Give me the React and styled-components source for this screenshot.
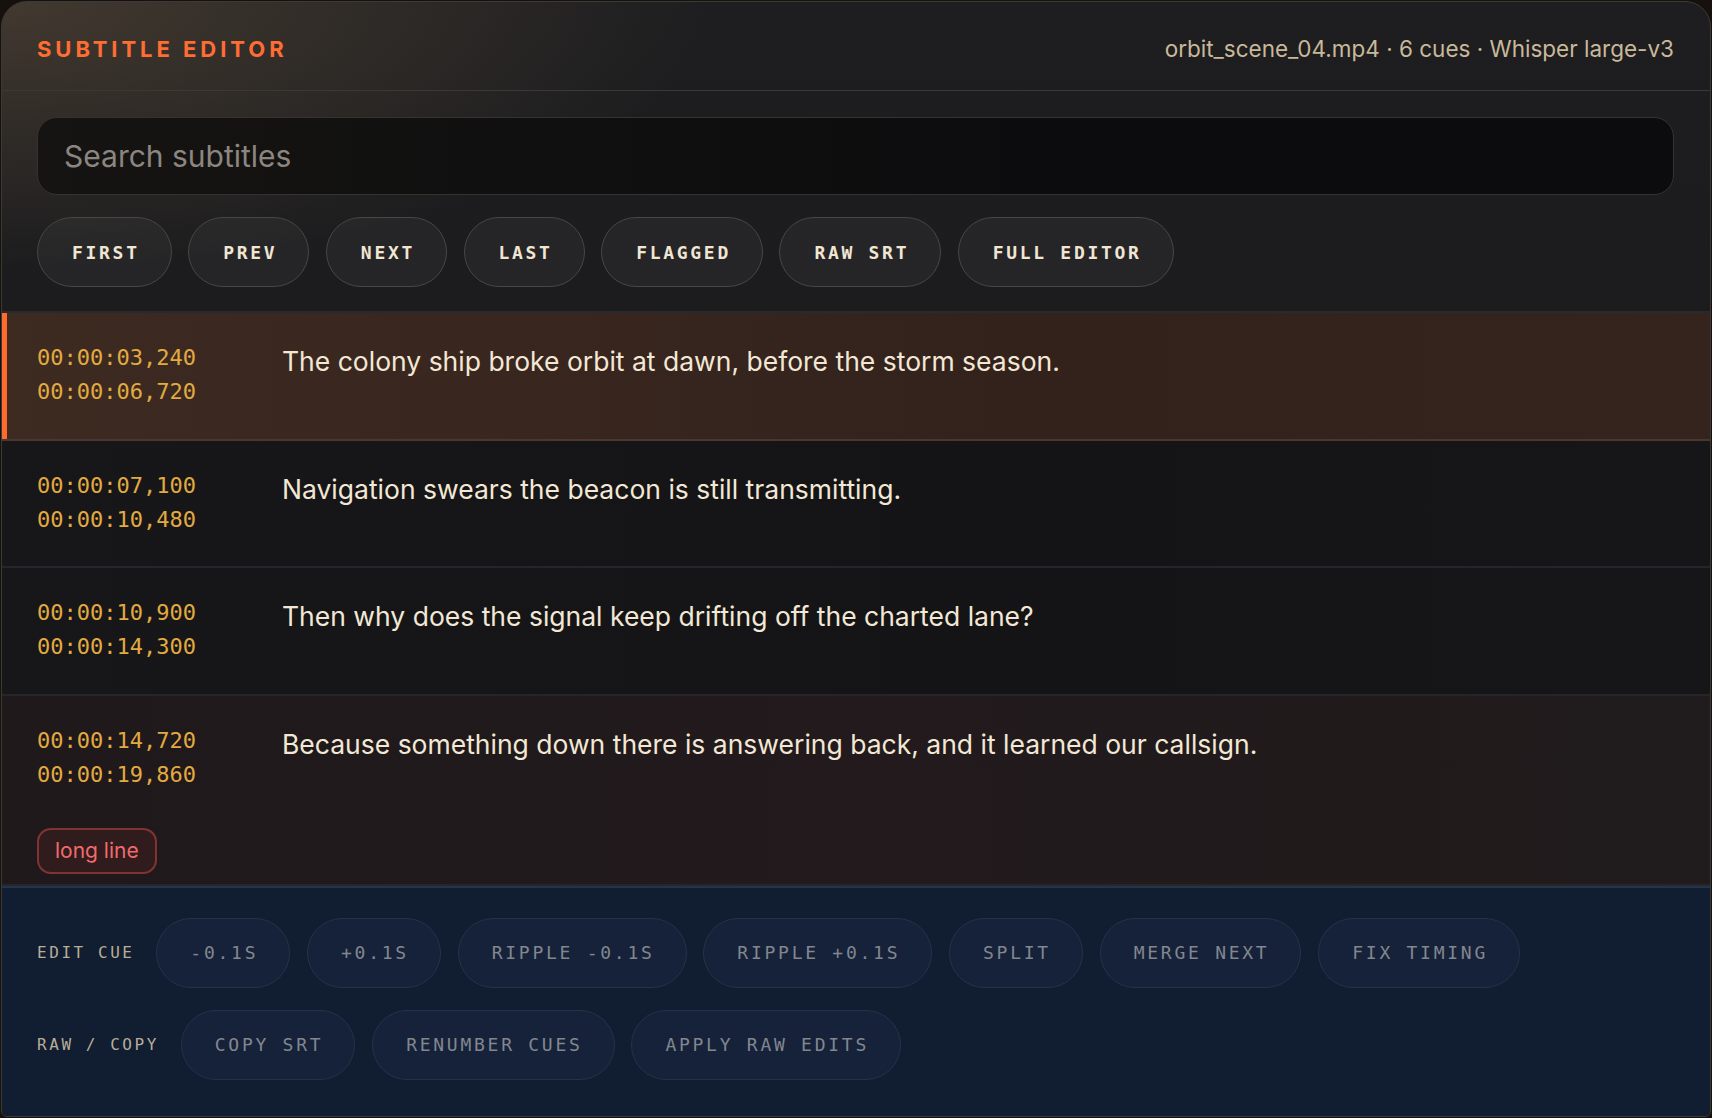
import styled, { createGlobalStyle } from 'styled-components';

const GlobalStyle = createGlobalStyle`
    html, body {
        margin: 0;
        padding: 0;
        background: #17110e;
    }
    * {
        box-sizing: border-box;
    }
`;

const SANS = `Inter, "Noto Sans", sans-serif`;
const MONO = `"DejaVu Sans Mono", "Liberation Mono", monospace`;

const Card = styled.div`
    margin: 1px;
    height: calc(100vh - 2px);
    border: 1px solid #3c3a37;
    border-radius: 26px 26px 6px 6px;
    overflow: hidden;
    display: flex;
    flex-direction: column;
    font-family: ${SANS};
    background:
        radial-gradient(ellipse 55% 32% at 0% 0%, rgba(110, 90, 66, 0.45), transparent 75%),
        linear-gradient(180deg, #1e1e20, #161618);
`;

const Header = styled.header`
    height: 89px;
    padding: 5px 36px 0 35px;
    display: flex;
    align-items: center;
    justify-content: space-between;
    border-bottom: 1px solid #3b3936;
`;

const Title = styled.h1`
    margin: 0;
    font-size: 22px;
    font-weight: 700;
    letter-spacing: 0.18em;
    color: #ff6d33;
`;

const Meta = styled.div`
    font-size: 22.5px;
    color: #c9b99b;
`;

const Toolbar = styled.section`
    padding: 26px 36px 24px 35px;
    display: flex;
    flex-direction: column;
    gap: 22px;
    border-bottom: 2px solid #2a2a2e;
`;

const Search = styled.input`
    height: 78px;
    width: 100%;
    border-radius: 20px;
    border: 1px solid #35332f;
    background: linear-gradient(90deg, #151412, #0c0c0e 60%);
    padding: 0 26px;
    font-family: ${SANS};
    font-size: 30px;
    color: #e8dccb;
    outline: none;

    &::placeholder {
        color: #8c8680;
    }
`;

const BtnRow = styled.div`
    display: flex;
    align-items: center;
    gap: ${p => p.$gap || 16}px;
`;

const NavBtn = styled.button`
    height: 70px;
    padding: 0 31px 0 34px;
    border-radius: 999px;
    border: 1.5px solid #4a4642;
    background: rgba(255, 255, 255, 0.045);
    color: #f1e6d4;
    font-family: ${MONO};
    font-weight: 700;
    font-size: 18px;
    letter-spacing: 0.15em;
    cursor: pointer;
`;

const Cues = styled.div`
    display: flex;
    flex-direction: column;
`;

const Cue = styled.div`
    padding: 28px 34px ${p => (p.$flagged ? 10 : 29.5)}px 35px;
    border-bottom: 2px solid ${p => (p.$active ? '#4a3830' : '#26262a')};
    background: ${p =>
        p.$active
            ? 'linear-gradient(90deg, #3d2b22, #33211c 60%, #35231d)'
            : p.$flagged
            ? 'linear-gradient(90deg, #1f191b, #221a1c 50%, #201b1c)'
            : 'linear-gradient(90deg, #171719, #141416 60%, #161618)'};
    box-shadow: ${p => (p.$active ? 'inset 5px 0 0 #ff6b2c' : 'none')};
`;

const CueMain = styled.div`
    display: grid;
    grid-template-columns: 245px 1fr;
    align-items: start;
`;

const Times = styled.div`
    display: flex;
    flex-direction: column;
    font-family: ${MONO};
    font-size: 22px;
    line-height: 34px;
    color: #e2aa40;
`;

const CueText = styled.div`
    font-size: 26.5px;
    line-height: 34px;
    padding-top: 3px;
    color: #f3e8d5;
`;

const Tags = styled.div`
    margin-top: 36px;
    display: flex;
    gap: 10px;
`;

const Tag = styled.span`
    height: 46px;
    padding: 0 16px;
    display: inline-flex;
    align-items: center;
    border-radius: 14px;
    border: 2px solid rgba(196, 72, 72, 0.55);
    background: rgba(170, 50, 50, 0.12);
    color: #f06b6b;
    font-size: 21px;
`;

const Footer = styled.footer`
    flex: 1;
    padding: 30px 36px 30px 35px;
    display: flex;
    flex-direction: column;
    gap: 22px;
    background: #111d30;
    border-top: 2px solid #263449;
`;

const Label = styled.span`
    font-family: ${MONO};
    font-size: 16px;
    letter-spacing: 0.16em;
    color: #b8ad98;
    margin-right: 5px;
`;

const ToolBtn = styled.button`
    height: 70px;
    padding: 0 31px 0 33px;
    border-radius: 999px;
    border: 1.5px solid #25324a;
    background: #16223a;
    color: #82878f;
    font-family: ${MONO};
    font-weight: 400;
    font-size: 18px;
    letter-spacing: 0.152em;
    cursor: pointer;
`;

const cues = [
    { start: '00:00:03,240', end: '00:00:06,720', text: 'The colony ship broke orbit at dawn, before the storm season.', active: true },
    { start: '00:00:07,100', end: '00:00:10,480', text: 'Navigation swears the beacon is still transmitting.' },
    { start: '00:00:10,900', end: '00:00:14,300', text: 'Then why does the signal keep drifting off the charted lane?' },
    { start: '00:00:14,720', end: '00:00:19,860', text: 'Because something down there is answering back, and it learned our callsign.', flags: ['long line'] },
];

const navBtns = ['FIRST', 'PREV', 'NEXT', 'LAST', 'FLAGGED', 'RAW SRT', 'FULL EDITOR'];
const editBtns = ['-0.1S', '+0.1S', 'RIPPLE -0.1S', 'RIPPLE +0.1S', 'SPLIT', 'MERGE NEXT', 'FIX TIMING'];
const rawBtns = ['COPY SRT', 'RENUMBER CUES', 'APPLY RAW EDITS'];

const App = () => {
    return (
        <>
            <GlobalStyle />
            <Card>
                <Header>
                    <Title>SUBTITLE EDITOR</Title>
                    <Meta>orbit_scene_04.mp4 · 6 cues · Whisper large-v3</Meta>
                </Header>
                <Toolbar>
                    <Search placeholder="Search subtitles" />
                    <BtnRow $gap={16.5}>
                        {navBtns.map(b => <NavBtn key={b}>{b}</NavBtn>)}
                    </BtnRow>
                </Toolbar>
                <Cues>
                    {cues.map(c => (
                        <Cue key={c.start} $active={c.active} $flagged={!!c.flags}>
                            <CueMain>
                                <Times>
                                    <span>{c.start}</span>
                                    <span>{c.end}</span>
                                </Times>
                                <CueText>{c.text}</CueText>
                            </CueMain>
                            {c.flags && (
                                <Tags>
                                    {c.flags.map(f => <Tag key={f}>{f}</Tag>)}
                                </Tags>
                            )}
                        </Cue>
                    ))}
                </Cues>
                <Footer>
                    <BtnRow $gap={16.8}>
                        <Label>EDIT CUE</Label>
                        {editBtns.map(b => <ToolBtn key={b}>{b}</ToolBtn>)}
                    </BtnRow>
                    <BtnRow $gap={16.8}>
                        <Label>RAW / COPY</Label>
                        {rawBtns.map(b => <ToolBtn key={b}>{b}</ToolBtn>)}
                    </BtnRow>
                </Footer>
            </Card>
        </>
    );
};

export default App;
